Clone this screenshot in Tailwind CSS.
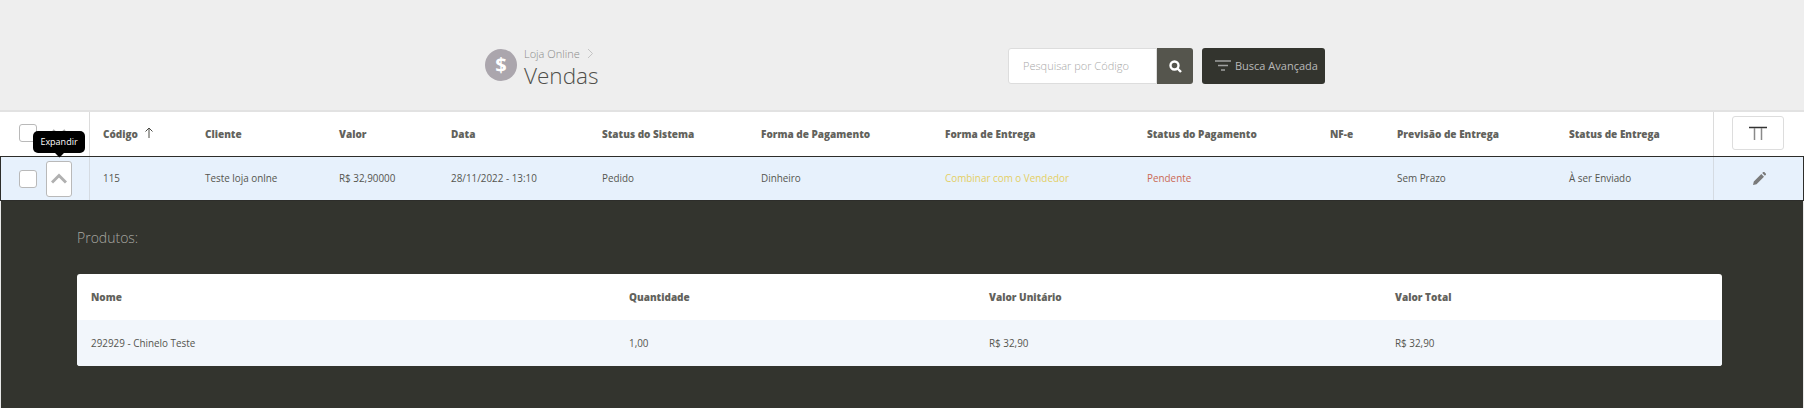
<!DOCTYPE html>
<html lang="pt-BR">
<head>
  <meta charset="UTF-8" />
  <title>Vendas</title>
  <script src="https://cdn.jsdelivr.net/npm/@tailwindcss/browser@4"></script>
</head>
<body class="bg-[#eeeeee] font-['Open_Sans',sans-serif] text-[#4a4a45] w-[1804px] h-[408px] overflow-hidden">

  <!-- Page header -->
  <header class="h-[110px] flex pl-[485px]">
    <div class="flex items-center h-[32px] mt-[49px] w-[523px]">
      <div class="w-[32px] h-[32px] rounded-full bg-[#aba6ad] flex items-center justify-center text-white text-[20px] font-bold">$</div>
      <div class="ml-[7px] mt-[7px]">
        <div class="flex items-center text-[11px] leading-[14px] text-[#8a8a8a] font-light">
          Loja Online
          <svg class="ml-[7px]" width="7" height="11" viewBox="0 0 7 11" fill="none" stroke="#c4c4c4"><path d="M1 1l4.500 4.500L1 10" /></svg>
        </div>
        <div class="text-[22.500px] leading-[30px] font-light text-[#4f4f4a]">Vendas</div>
      </div>
    </div>
    <div class="flex mt-[48px] h-[36px]">
      <div class="w-[149px] h-[36px] bg-white border border-[#dddddd] rounded-l-[3px] pl-[14px] flex items-center text-[11px] font-light text-[#a8a8a8]">Pesquisar por Código</div>
      <button class="w-[36px] h-[36px] bg-[#55554d] rounded-r-[3px] flex items-center justify-center">
        <svg width="13" height="13" viewBox="0 0 13 13" fill="none" stroke="white" stroke-width="2.400"><circle cx="5.500" cy="5.500" r="4" /><path d="M8.500 8.500L12 12" /></svg>
      </button>
      <button class="ml-[9px] w-[123px] h-[36px] bg-[#33342e] rounded-[3px] flex items-center pl-[13px] text-[11px] text-[#b9b9b9]">
        <svg class="mr-[4px]" width="16" height="12" viewBox="0 0 16 12" fill="none" stroke="#a0a0a0" stroke-width="1.500"><path d="M0 1h16M3 5.500h10M6 10h4" /></svg>
        Busca Avançada
      </button>
    </div>
  </header>

  <!-- Table head -->
  <div class="h-[46px] bg-white border-t-2 border-[#e2e2e2] grid grid-cols-[90px_13px_102px_134px_112px_151px_159px_184px_202px_183px_67px_172px_144px_91px] items-center text-[10px] font-extrabold text-[#62625c]">
    <div class="h-full border-r border-[#dcdcdc] flex items-center pl-[19px]">
      <span class="block w-[18px] h-[18px] bg-white border border-[#b9b9b9] rounded-[3px] -mt-[2px]"></span>
      <svg class="ml-[15px] -mt-[2px]" width="16" height="8" viewBox="0 0 16 8" fill="none" stroke="#aaaaaa" stroke-width="2"><path d="M1 1l6 5 6-5" /></svg>
    </div>
    <div></div>
    <div class="flex items-center">Código
      <svg class="ml-[7px] -mt-[3px]" width="8" height="11" viewBox="0 0 8 11" fill="none" stroke="#4a4a45"><path d="M4 11V1M.5 4.500L4 1l3.500 3.500" /></svg>
    </div>
    <div>Cliente</div>
    <div>Valor</div>
    <div>Data</div>
    <div>Status do Sistema</div>
    <div>Forma de Pagamento</div>
    <div>Forma de Entrega</div>
    <div>Status do Pagamento</div>
    <div>NF-e</div>
    <div class="whitespace-nowrap">Previsão de Entrega</div>
    <div>Status de Entrega</div>
    <div class="h-full border-l border-[#dcdcdc] flex items-center pl-[18px]">
      <div class="w-[52px] h-[34px] border border-[#dddddd] rounded-[3px] flex items-center justify-center -mt-[2px]">
        <svg width="18" height="14" viewBox="0 0 18 14" fill="none"><path d="M0 1.500h18" stroke="#333333" stroke-width="1.500" /><path d="M5.500 2v12M12.500 2v12" stroke="#8a8a8a" stroke-width="1.500" /></svg>
      </div>
    </div>
  </div>

  <!-- Sale row -->
  <div class="relative h-[45px] bg-[#e7f1fc] border border-[#2d2d2a] grid grid-cols-[89px_13px_102px_134px_112px_151px_159px_184px_202px_183px_67px_172px_144px_90px] items-center text-[9.900px] text-[#55554f]">
    <div class="h-full border-r border-[#d5dbe2] flex items-center pl-[18px]">
      <span class="block w-[18px] h-[18px] bg-white border border-[#b9b9b9] rounded-[3px]"></span>
      <button class="ml-[9px] w-[26px] h-[36px] bg-white border border-[#b9b9b9] rounded-[3px] flex items-center justify-center">
        <svg width="16" height="11" viewBox="0 0 16 11" fill="none" stroke="#b0b0b0" stroke-width="3"><path d="M1 9.500l7-7 7 7" /></svg>
      </button>
    </div>
    <div></div>
    <div>115</div>
    <div>Teste loja onlne</div>
    <div>R$ 32,90000</div>
    <div>28/11/2022 - 13:10</div>
    <div>Pedido</div>
    <div>Dinheiro</div>
    <div class="text-[#e4cf63]">Combinar com o Vendedor</div>
    <div class="text-[#cb6a55]">Pendente</div>
    <div></div>
    <div class="whitespace-nowrap">Sem Prazo</div>
    <div>À ser Enviado</div>
    <div class="h-full border-l border-[#d5dbe2] flex items-center pl-[39px]">
      <svg width="13" height="13" viewBox="0 0 13 13" fill="#7a7a7a"><path d="M0 13l.8-3.500L8.300 2l2.700 2.700L3.500 12.200zM9.200 1.100l1-1a.8.8 0 0 1 1.100 0l1.600 1.600a.8.8 0 0 1 0 1.100l-1 1z" /></svg>
    </div>

    <!-- Tooltip -->
    <div class="absolute left-[32px] top-[-26px] w-[52px] h-[22px] bg-black rounded-[5px] text-white text-[9px] flex items-center justify-center">Expandir
      <span class="absolute left-[23px] bottom-[-3px] w-[7px] h-[7px] bg-black rotate-45"></span>
    </div>
  </div>

  <!-- Expanded products -->
  <section class="h-[207px] bg-[#33342e] border-l border-r border-[#e8e8e8] pl-[76px] pr-[81px]">
    <h2 class="pt-[27px] text-[14px] leading-[20px] font-light text-[#a8a8a2]">Produtos:</h2>
    <div class="mt-[26px] w-[1645px] h-[92px] bg-white rounded-[3px] overflow-hidden">
      <div class="h-[46px] pt-[1px] grid grid-cols-[538px_360px_406px_1fr] pl-[14px] items-center text-[10px] font-extrabold text-[#62625c]">
        <div>Nome</div>
        <div>Quantidade</div>
        <div>Valor Unitário</div>
        <div>Valor Total</div>
      </div>
      <div class="h-[46px] bg-[#f2f6fb] grid grid-cols-[538px_360px_406px_1fr] pl-[14px] items-center text-[9.900px] text-[#55554f]">
        <div>292929 - Chinelo Teste</div>
        <div>1,00</div>
        <div>R$ 32,90</div>
        <div>R$ 32,90</div>
      </div>
    </div>
  </section>

</body>
</html>
